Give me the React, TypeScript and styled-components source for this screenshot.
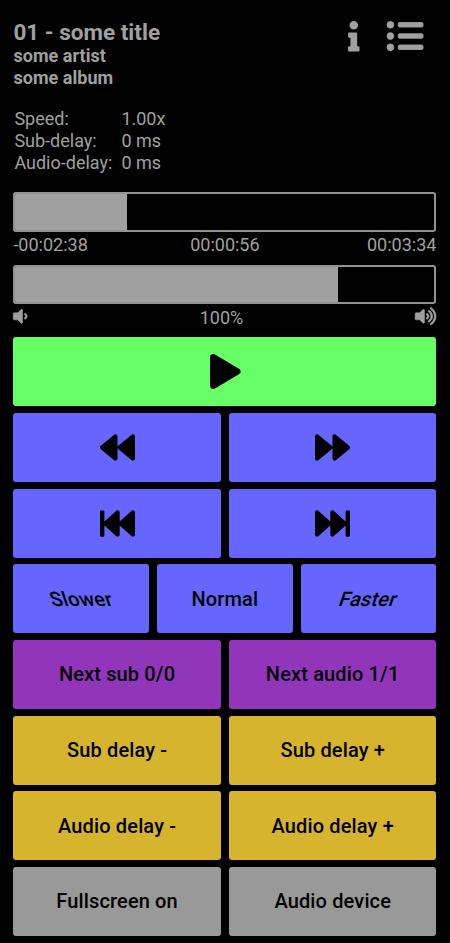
import React from "react";
import styled, { createGlobalStyle } from "styled-components";
import {
  FaBackward,
  FaFastBackward,
  FaFastForward,
  FaForward,
  FaInfo,
  FaListUl,
  FaPlay,
  FaVolumeDown,
  FaVolumeUp,
} from "react-icons/fa";

const GlobalStyle = createGlobalStyle`
  *, *::before, *::after { box-sizing: border-box; }
  body {
    margin: 0;
    background: #000;
    color: #a0a0a0;
    font: 18px/22px Roboto, sans-serif;
  }
`;

const Page = styled.main`
  width: 450px;
  height: 943px;
  padding: 20px 13.6px 0 13.4px;
  display: flex;
  flex-direction: column;
  overflow: hidden;
`;

const Icon = styled.span<{ $width: number; $height: number; $stroke?: number }>`
  display: block;
  flex: none;
  width: ${(p) => p.$width}px;
  height: ${(p) => p.$height}px;

  svg {
    display: block;
    width: 100%;
    height: 100%;
    overflow: visible;
    stroke-width: ${(p) => p.$stroke ?? 0};
  }
`;

const Header = styled.header`
  display: flex;
  justify-content: space-between;
  height: 88px;
`;

const Title = styled.h1`
  margin: 0;
  font-size: 22.5px;
  line-height: 25px;
  font-weight: 700;
`;

const Subtitle = styled.h2`
  margin: 0;
  font-size: 18px;
  line-height: 22px;
  letter-spacing: 0.04px;
  font-weight: 700;
`;

const HeaderIcons = styled.div`
  display: flex;
  align-items: center;
  gap: 27px;
  height: 32px;
  padding-right: 13.6px;
`;

const Status = styled.dl`
  display: grid;
  grid-template-columns: 107px auto;
  margin: 0 0 18.4px;
  padding-left: 1px;
`;

const StatusLabel = styled.dt``;

const StatusValue = styled.dd`
  margin: 0;
`;

const Meter = styled.div`
  flex: none;
  height: 39.3px;
  border: 2px solid #929292;
  border-radius: 3px;
  overflow: hidden;
`;

const MeterFill = styled.div`
  height: 100%;
  background: #a0a0a0;
`;

const TimeLabels = styled.div`
  display: grid;
  grid-template-columns: 1fr auto 1fr;
  flex: none;
  height: 33.1px;
  padding-top: 2.8px;

  & > :last-child { justify-self: end; }
`;

const VolumeLabels = styled.div`
  display: flex;
  justify-content: space-between;
  flex: none;
  height: 33.1px;
  padding-top: 2.9px;
`;

const Controls = styled.div`
  display: flex;
  flex-direction: column;
  gap: 6.7px;
`;

const ButtonRow = styled.div`
  display: flex;
  gap: 8.2px;
`;

const colors = {
  green: "#66ff66",
  blue: "#6666ff",
  purple: "#9135bb",
  gold: "#d6b42e",
  gray: "#999999",
};

const Button = styled.button<{ $color: keyof typeof colors }>`
  flex: 1 1 0;
  height: 69px;
  padding: 0;
  border: 0;
  border-radius: 3px;
  display: flex;
  align-items: center;
  justify-content: center;
  background: ${(p) => colors[p.$color]};
  color: #000;
  font: 500 20px/24px Roboto, sans-serif;
  letter-spacing: 0.14px;
`;

const Slanted = styled.span<{ $angle: number }>`
  display: inline-block;
  transform: skewX(${(p) => p.$angle}deg);
`;

export default function App() {
  return (
    <>
      <GlobalStyle />
      <Page>
        <Header>
          <div>
            <Title>01 - some title</Title>
            <Subtitle>some artist</Subtitle>
            <Subtitle>some album</Subtitle>
          </div>
          <HeaderIcons>
            <Icon $width={11.6} $height={30.6}><FaInfo /></Icon>
            <Icon $width={36} $height={36} $stroke={12}><FaListUl /></Icon>
          </HeaderIcons>
        </Header>
        <Status>
          <StatusLabel>Speed:</StatusLabel>
          <StatusValue>1.00x</StatusValue>
          <StatusLabel>Sub-delay:</StatusLabel>
          <StatusValue>0 ms</StatusValue>
          <StatusLabel>Audio-delay:</StatusLabel>
          <StatusValue>0 ms</StatusValue>
        </Status>
        <Meter>
          <MeterFill style={{ width: "26.7%" }} />
        </Meter>
        <TimeLabels>
          <span>-00:02:38</span>
          <span>00:00:56</span>
          <span>00:03:34</span>
        </TimeLabels>
        <Meter>
          <MeterFill style={{ width: "77.1%" }} />
        </Meter>
        <VolumeLabels>
          <Icon $width={14.4} $height={18.6} $stroke={16}><FaVolumeDown /></Icon>
          <span>100%</span>
          <Icon $width={21.2} $height={18.6} $stroke={16}><FaVolumeUp /></Icon>
        </VolumeLabels>
        <Controls>
          <ButtonRow>
            <Button $color="green" aria-label="Play">
              <Icon $width={30.6} $height={35}><FaPlay /></Icon>
            </Button>
          </ButtonRow>
          <ButtonRow>
            <Button $color="blue" aria-label="Rewind">
              <Icon $width={35} $height={35}><FaBackward /></Icon>
            </Button>
            <Button $color="blue" aria-label="Forward">
              <Icon $width={35} $height={35}><FaForward /></Icon>
            </Button>
          </ButtonRow>
          <ButtonRow>
            <Button $color="blue" aria-label="Previous">
              <Icon $width={35} $height={35}><FaFastBackward /></Icon>
            </Button>
            <Button $color="blue" aria-label="Next">
              <Icon $width={35} $height={35}><FaFastForward /></Icon>
            </Button>
          </ButtonRow>
          <ButtonRow>
            <Button $color="blue"><Slanted $angle={19}>Slower</Slanted></Button>
            <Button $color="blue">Normal</Button>
            <Button $color="blue"><Slanted $angle={-19}>Faster</Slanted></Button>
          </ButtonRow>
          <ButtonRow>
            <Button $color="purple">Next sub 0/0</Button>
            <Button $color="purple">Next audio 1/1</Button>
          </ButtonRow>
          <ButtonRow>
            <Button $color="gold">Sub delay -</Button>
            <Button $color="gold">Sub delay +</Button>
          </ButtonRow>
          <ButtonRow>
            <Button $color="gold">Audio delay -</Button>
            <Button $color="gold">Audio delay +</Button>
          </ButtonRow>
          <ButtonRow>
            <Button $color="gray">Fullscreen on</Button>
            <Button $color="gray">Audio device</Button>
          </ButtonRow>
        </Controls>
      </Page>
    </>
  );
}
